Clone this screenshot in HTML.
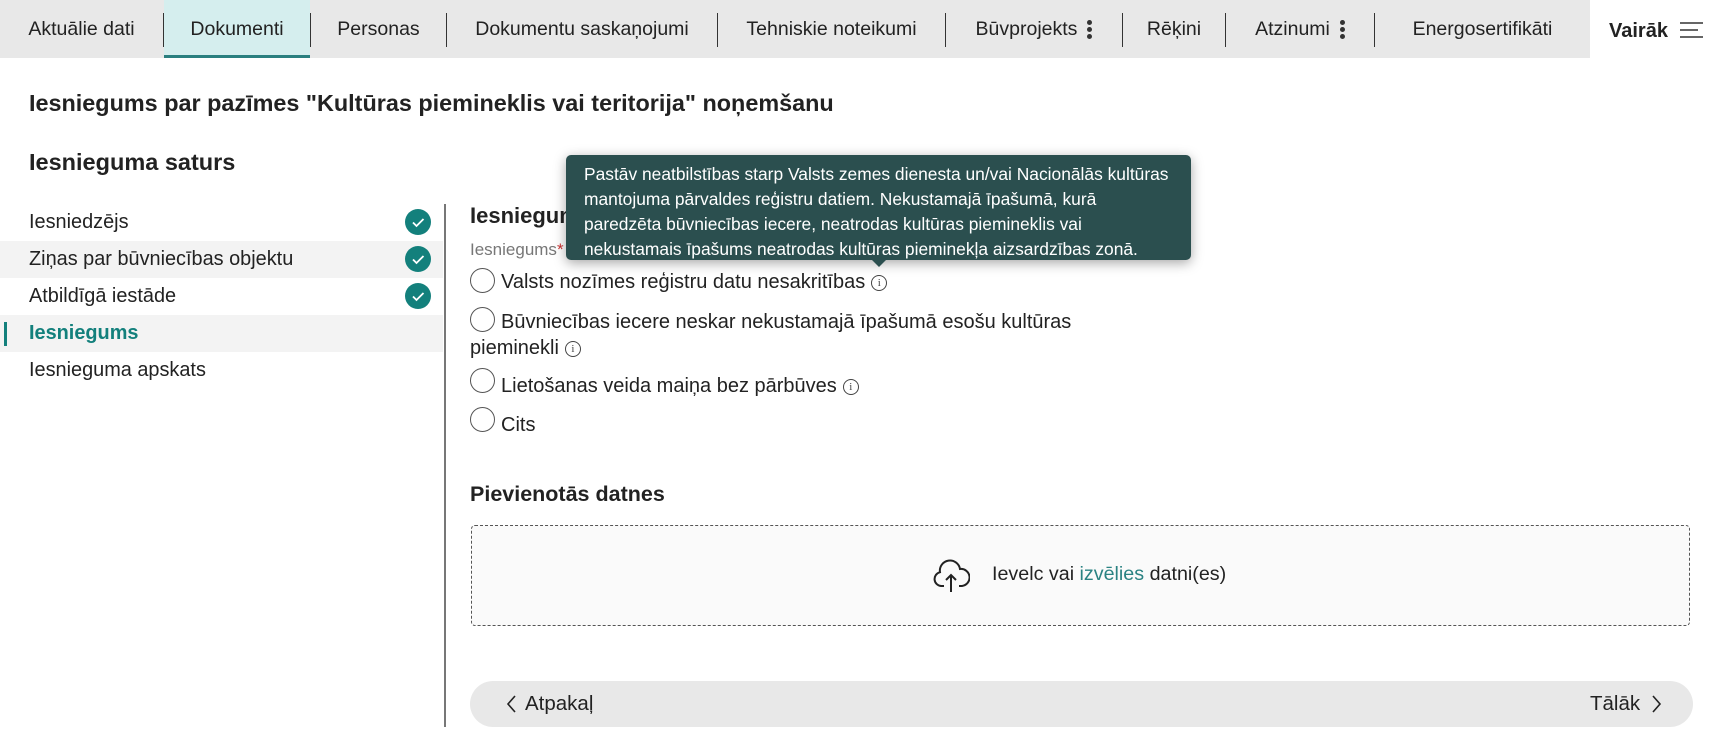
<!DOCTYPE html>
<html><head><meta charset="utf-8"><style>
*{box-sizing:border-box;margin:0;padding:0}
body{width:1713px;height:752px;overflow:hidden;background:#fff;font-family:"Liberation Sans",sans-serif;color:#222;position:relative}
.tabs{position:absolute;left:0;top:0;width:1590px;height:58px;background:#e8e8e8}
.tab{position:absolute;top:0;height:58px;line-height:58px;font-size:19.5px;color:#222;text-align:center;white-space:nowrap}
.sep{position:absolute;top:13px;width:1px;height:34px;background:#333}
.active{background:#d5eeee;border-bottom:3px solid #2a7f7f}
.vairak{position:absolute;left:1590px;top:0;width:123px;height:58px;background:#fff}
.dots{display:inline-block;vertical-align:middle;margin-left:10px;width:5px}
.dots i{display:block;width:5px;height:5px;border-radius:50%;background:#333;margin:2px 0}
.abs{position:absolute;white-space:nowrap}
h1{position:absolute;left:29px;top:90px;font-size:23.4px;font-weight:bold;color:#222}
.row{position:absolute;left:0;width:443px;height:37px;line-height:37px;padding-left:29px;font-size:19.9px}
.row.g{background:#f3f3f3}
.chk{position:absolute;left:405px;top:5px;width:26px;height:26px;border-radius:50%;background:#13807c}
.radio{position:absolute;width:25px;height:25px;border:1.3px solid #555;border-radius:50%;background:#fff}
.opt{position:absolute;font-size:20px;color:#222;white-space:nowrap}
.info{display:inline-block;width:16px;height:16px;border:1px solid #444;border-radius:50%;font-size:11px;line-height:14px;text-align:center;vertical-align:middle;margin-left:6px;color:#444;font-family:"Liberation Serif",serif}
</style></head><body>
<div class="tabs">
 <div class="tab" style="left:0;width:163px">Aktuālie dati</div>
 <div class="tab active" style="left:164px;width:146px">Dokumenti</div>
 <div class="tab" style="left:311px;width:135px">Personas</div>
 <div class="tab" style="left:447px;width:270px">Dokumentu saskaņojumi</div>
 <div class="tab" style="left:718px;width:227px">Tehniskie noteikumi</div>
 <div class="tab" style="left:946px;width:176px">Būvprojekts<span class="dots"><i></i><i></i><i></i></span></div>
 <div class="tab" style="left:1123px;width:102px">Rēķini</div>
 <div class="tab" style="left:1226px;width:148px">Atzinumi<span class="dots"><i></i><i></i><i></i></span></div>
 <div class="tab" style="left:1375px;width:215px">Energosertifikāti</div>
 <div class="sep" style="left:163px"></div><div class="sep" style="left:310px"></div><div class="sep" style="left:446px"></div><div class="sep" style="left:717px"></div><div class="sep" style="left:945px"></div><div class="sep" style="left:1122px"></div><div class="sep" style="left:1225px"></div><div class="sep" style="left:1374px"></div>
</div>
<div class="vairak"><span class="abs" style="left:19px;top:20px;font-size:20px;font-weight:bold;color:#222">Vairāk</span>
<svg class="abs" style="left:89px;top:21px" width="26" height="18"><path d="M1 2H24M1 9H19M1 16H24" stroke="#333" stroke-width="1.6"/></svg></div>

<h1>Iesniegums par pazīmes "Kultūras piemineklis vai teritorija" noņemšanu</h1>
<div class="abs" style="left:29px;top:149px;font-size:23.5px;font-weight:bold">Iesnieguma saturs</div>

<div class="row" style="top:204px">Iesniedzējs<div class="chk"><svg width="26" height="26"><path d="M8 13.5l3.5 3.5 7-7" fill="none" stroke="#fff" stroke-width="1.8"/></svg></div></div>
<div class="row g" style="top:241px">Ziņas par būvniecības objektu<div class="chk"><svg width="26" height="26"><path d="M8 13.5l3.5 3.5 7-7" fill="none" stroke="#fff" stroke-width="1.8"/></svg></div></div>
<div class="row" style="top:278px">Atbildīgā iestāde<div class="chk"><svg width="26" height="26"><path d="M8 13.5l3.5 3.5 7-7" fill="none" stroke="#fff" stroke-width="1.8"/></svg></div></div>
<div class="row g" style="top:315px;font-weight:bold;color:#13807c">Iesniegums<div style="position:absolute;left:4px;top:7px;width:3px;height:24px;background:#13807c"></div></div>
<div class="row" style="top:352px">Iesnieguma apskats</div>
<div class="abs" style="left:444px;top:204px;width:1.5px;height:523px;background:#777"></div>

<div class="abs" style="left:470px;top:203px;font-size:22px;font-weight:bold">Iesniegums</div>
<div class="abs" style="left:470px;top:240px;font-size:17px;color:#777">Iesniegums<span style="color:#c33">*</span></div>
<div class="radio" style="left:470px;top:268px"></div>
<div class="opt" style="left:501px;top:271px">Valsts nozīmes reģistru datu nesakritības<span class="info">i</span></div>
<div class="radio" style="left:470px;top:307px"></div>
<div class="opt" style="left:501px;top:311px">Būvniecības iecere neskar nekustamajā īpašumā esošu kultūras</div>
<div class="opt" style="left:470px;top:337px">pieminekli<span class="info">i</span></div>
<div class="radio" style="left:470px;top:368px"></div>
<div class="opt" style="left:501px;top:375px">Lietošanas veida maiņa bez pārbūves<span class="info">i</span></div>
<div class="radio" style="left:470px;top:407px"></div>
<div class="opt" style="left:501px;top:414px">Cits</div>

<div class="abs" style="left:566px;top:155px;width:625px;height:105px;background:#2b4f4f;border-radius:5px;box-shadow:0 3px 12px rgba(0,0,0,.35);color:#fff;font-size:17.4px;line-height:25px;padding:7px 18px;white-space:normal">Pastāv neatbilstības starp Valsts zemes dienesta un/vai Nacionālās kultūras mantojuma pārvaldes reģistru datiem. Nekustamajā īpašumā, kurā paredzēta būvniecības iecere, neatrodas kultūras piemineklis vai nekustamais īpašums neatrodas kultūras pieminekļa aizsardzības zonā.</div>
<div class="abs" style="left:871px;top:259px;width:0;height:0;border-left:8px solid transparent;border-right:8px solid transparent;border-top:8px solid #2b4f4f"></div>

<div class="abs" style="left:470px;top:482px;font-size:21.5px;font-weight:bold">Pievienotās datnes</div>
<div class="abs" style="left:471px;top:525px;width:1219px;height:101px;background:#fafafa;border:1px dashed #555;border-radius:4px"></div>
<svg class="abs" style="left:932px;top:556px" width="38" height="38" viewBox="0 0 38 38"><path d="M12 30H9a7 7 0 0 1-1-13.8A10 10 0 0 1 28 13a8 8 0 0 1 2 17h-3" fill="none" stroke="#222" stroke-width="2"/><path d="M19 36V19M14 24l5-5 5 5" fill="none" stroke="#222" stroke-width="2"/></svg>
<div class="abs" style="left:992px;top:563px;font-size:19.7px">Ievelc vai <span style="color:#2a8282">izvēlies</span> datni(es)</div>

<div class="abs" style="left:470px;top:681px;width:1223px;height:46px;background:#e8e8e8;border-radius:23px"></div>
<svg class="abs" style="left:506px;top:694px" width="12" height="20"><path d="M9 2L2 10l7 8" fill="none" stroke="#222" stroke-width="1.6"/></svg>
<div class="abs" style="left:525px;top:692px;font-size:20.5px">Atpakaļ</div>
<div class="abs" style="left:1590px;top:692px;font-size:20.5px">Tālāk</div>
<svg class="abs" style="left:1650px;top:694px" width="12" height="20"><path d="M3 2l7 8-7 8" fill="none" stroke="#222" stroke-width="1.6"/></svg>
</body></html>
